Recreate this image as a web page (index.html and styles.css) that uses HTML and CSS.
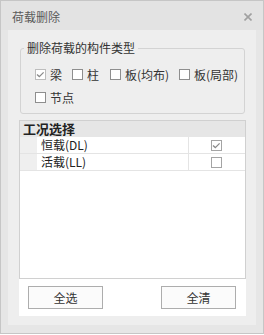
FILE: index.html
```html
<!DOCTYPE html>
<html lang="zh">
<head>
<meta charset="UTF-8">
<title>荷载删除</title>
<link rel="stylesheet" href="styles.css">
</head>
<body>
<div class="dialog">
  <div class="titlebar">
    <span class="title">荷载删除</span>
    <svg class="close" width="8" height="8" viewBox="0 0 8 8"><path d="M0.5 0.5L7.5 7.5M7.5 0.5L0.5 7.5"/></svg>
  </div>

  <div class="content">
    <fieldset class="group">
      <legend>删除荷载的构件类型</legend>
      <div class="types">
        <label class="chk"><span class="box on"><svg viewBox="0 0 11 11"><path d="M2 5.5L4.3 7.6L8.6 3.4"/></svg></span>梁</label>
        <label class="chk"><span class="box"></span>柱</label>
        <label class="chk"><span class="box"></span>板(均布)</label>
        <label class="chk"><span class="box"></span>板(局部)</label>
        <label class="chk"><span class="box"></span>节点</label>
      </div>
    </fieldset>

    <div class="panel">
      <div class="list">
        <div class="list-head">工况选择</div>
        <div class="list-row">
          <span class="gutter"></span>
          <span class="name">恒载(DL)</span>
          <span class="pick"><span class="box lbox on"><svg viewBox="0 0 11 11"><path d="M2 5.5L4.3 7.6L8.6 3.4"/></svg></span></span>
        </div>
        <div class="list-row">
          <span class="gutter"></span>
          <span class="name">活载(LL)</span>
          <span class="pick"><span class="box lbox"></span></span>
        </div>
        <div class="list-fill"><span class="gutter"></span></div>
      </div>
      <div class="buttons">
        <button class="btn">全选</button>
        <button class="btn">全清</button>
      </div>
    </div>
  </div>
</div>
</body>
</html>
```

FILE: styles.css
```css
body{margin:0;background:#fff;font-family:"Noto Sans CJK SC","Noto Sans",sans-serif;font-size:12px;color:#333}
.dialog{width:264px;height:334px;box-sizing:border-box;border:1px solid #c6c6c6;background:#e6e6e6;display:flex;flex-direction:column}

/* barra de titulo */
.titlebar{height:29px;background:#e3e3e3;display:flex;align-items:center;justify-content:space-between;padding:0 11px 0 11px}
.title{font-size:12px;color:#5a5a5a;line-height:14px;margin-top:2px}
.close{stroke:#a0a0a0;stroke-width:1.6;fill:none;margin-top:2px}

.content{flex:1;margin:0 7px 8px 7px;background:#eeeeee;display:flex;flex-direction:column;padding:11px 0 9px 0}

/* grupo */
.group{margin:0 11px 0 12px;padding:0 0 8px 3px;border:1px solid #d3d3d3;border-radius:3px;min-width:0}
.group legend{padding:0 3px;font-size:12px;line-height:14px;color:#333}
.types{display:grid;grid-template-columns:37px 38px 69px auto;row-gap:7px;margin:11px 0 0 11px}
.chk{display:flex;align-items:center;height:16px;white-space:nowrap;color:#333}

.box{width:11px;height:11px;box-sizing:border-box;border:1px solid #8e8e8e;background:#fff;margin-right:4px;display:inline-block;flex:none;position:relative}
.box svg{position:absolute;left:-1px;top:-1px;width:11px;height:11px;fill:none;stroke:#8a8a8a;stroke-width:1.3}
.box.on{border-color:#bdbdbd}

/* lista */
.panel{flex:1;margin:6px 10px 0 11px;background:#fff;display:flex;flex-direction:column}
.list{height:159px;box-sizing:border-box;border:1px solid #d0d0d0;display:flex;flex-direction:column}
.list-head{height:16px;background:#e6e6e6;font-weight:bold;font-size:13px;line-height:16px;padding-left:3px;color:#222}
.list-row{display:grid;grid-template-columns:17px 151px auto;height:16px;border-bottom:1px solid #e4e4e4;margin-top:0}
.list-row .name{padding-left:4px;line-height:16px;color:#222}
.list-row .pick{border-left:1px solid #e4e4e4;display:flex;align-items:center;justify-content:center}
.gutter{background:#efefef}
.list-row:first-of-type{border-top:1px solid #fff}
.list-fill{flex:1;display:grid;grid-template-columns:17px auto}
.list-fill .gutter{background:#fff}
.lbox{margin:0 0 0 -1px;border-color:#a4a4a4}
.lbox.on{border-color:#a4a4a4}

/* botones */
.buttons{display:flex;justify-content:space-between;padding:7px 10px 0 9px}
.btn{width:75px;height:23px;border:1px solid #adadad;background:#fbfbfb;font-family:inherit;font-size:12px;color:#333;padding:0}
```
